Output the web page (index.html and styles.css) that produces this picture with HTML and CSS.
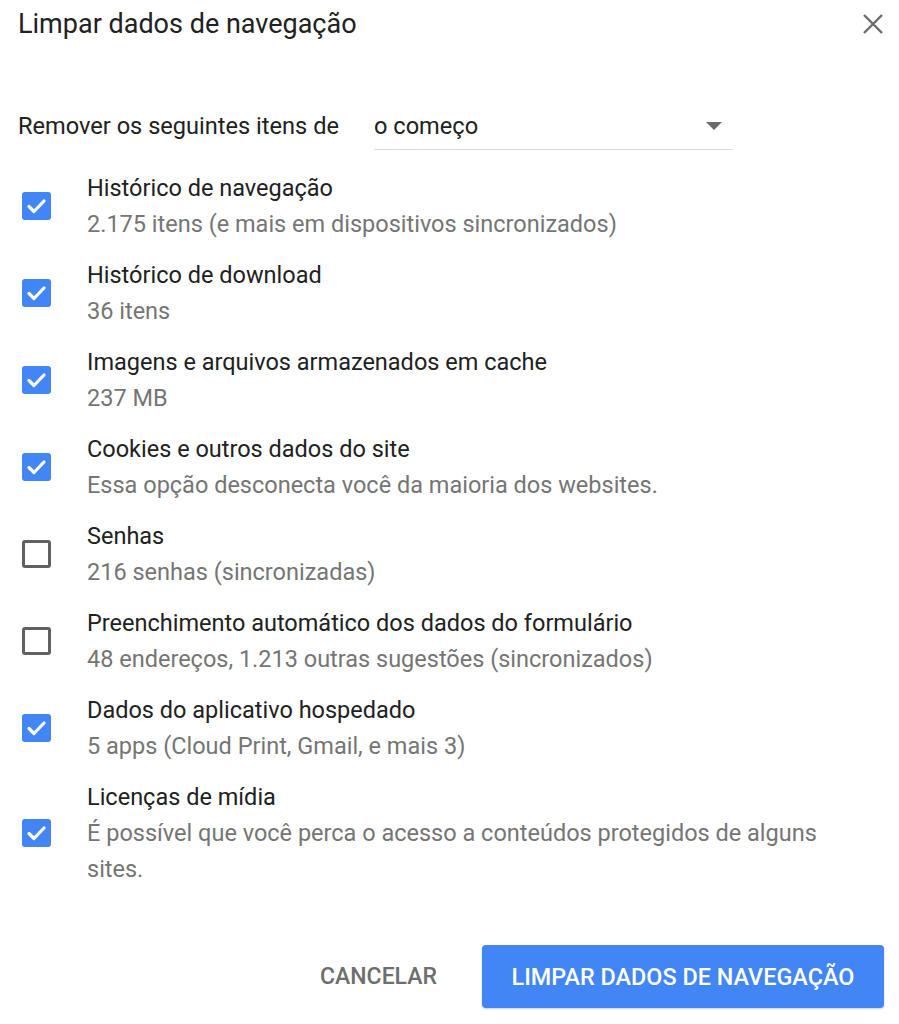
FILE: index.html
```html
<!DOCTYPE html>
<html lang="pt-BR">
<head>
    <meta charset="UTF-8">
    <meta name="viewport" content="width=device-width, initial-scale=1.0">
    <title>Limpar dados de navegação</title>
    <link rel="stylesheet" href="styles.css">
</head>
<body>
    <div class="dialog">
        <header class="dialog-header">
            <h1>Limpar dados de navegação</h1>
            <button class="close-btn" aria-label="Fechar">
                <svg width="22" height="22" viewBox="0 0 22 22">
                    <path d="M2 2 L20 20 M20 2 L2 20" stroke="#6b6b6b" stroke-width="2.4" fill="none"/>
                </svg>
            </button>
        </header>

        <div class="range-row">
            <span class="range-label">Remover os seguintes itens de</span>
            <div class="select">
                <span>o começo</span>
                <span class="arrow"></span>
            </div>
        </div>

        <ul class="options">
            <li class="option">
                <span class="checkbox checked"></span>
                <div class="option-text">
                    <div class="option-title">Histórico de navegação</div>
                    <div class="option-sub">2.175 itens (e mais em dispositivos sincronizados)</div>
                </div>
            </li>
            <li class="option">
                <span class="checkbox checked"></span>
                <div class="option-text">
                    <div class="option-title">Histórico de download</div>
                    <div class="option-sub">36 itens</div>
                </div>
            </li>
            <li class="option">
                <span class="checkbox checked"></span>
                <div class="option-text">
                    <div class="option-title">Imagens e arquivos armazenados em cache</div>
                    <div class="option-sub">237 MB</div>
                </div>
            </li>
            <li class="option">
                <span class="checkbox checked"></span>
                <div class="option-text">
                    <div class="option-title">Cookies e outros dados do site</div>
                    <div class="option-sub">Essa opção desconecta você da maioria dos websites.</div>
                </div>
            </li>
            <li class="option">
                <span class="checkbox"></span>
                <div class="option-text">
                    <div class="option-title">Senhas</div>
                    <div class="option-sub">216 senhas (sincronizadas)</div>
                </div>
            </li>
            <li class="option">
                <span class="checkbox"></span>
                <div class="option-text">
                    <div class="option-title">Preenchimento automático dos dados do formulário</div>
                    <div class="option-sub">48 endereços, 1.213 outras sugestões (sincronizados)</div>
                </div>
            </li>
            <li class="option">
                <span class="checkbox checked"></span>
                <div class="option-text">
                    <div class="option-title">Dados do aplicativo hospedado</div>
                    <div class="option-sub">5 apps (Cloud Print, Gmail, e mais 3)</div>
                </div>
            </li>
            <li class="option">
                <span class="checkbox checked"></span>
                <div class="option-text">
                    <div class="option-title">Licenças de mídia</div>
                    <div class="option-sub">É possível que você perca o acesso a conteúdos protegidos de alguns sites.</div>
                </div>
            </li>
        </ul>

        <footer class="dialog-footer">
            <button class="btn-cancel">CANCELAR</button>
            <button class="btn-primary">LIMPAR DADOS DE NAVEGAÇÃO</button>
        </footer>
    </div>
</body>
</html>
```

FILE: styles.css
```css
body {
    margin: 0;
    padding: 0;
    background-color: #fff;
    font-family: Roboto, "Liberation Sans", Arial, sans-serif;
    color: #212121;
}

.dialog {
    width: 899px;
    height: 1024px;
    box-sizing: border-box;
    padding: 0 15px 0 18px;
    display: flex;
    flex-direction: column;
}

.dialog-header {
    display: flex;
    justify-content: space-between;
    align-items: center;
    height: 48px;
}

.dialog-header h1 {
    margin: 0;
    font-size: 27px;
    font-weight: 400;
    color: #212121;
}

.close-btn {
    background: none;
    border: none;
    padding: 0;
    display: flex;
    cursor: pointer;
}

.range-row {
    display: flex;
    align-items: flex-end;
    margin-top: 54px;
    height: 48px;
}

.range-label {
    font-size: 23.6px;
    line-height: 48px;
    width: 356px;
}

.select {
    width: 359px;
    height: 47px;
    border-bottom: 1px solid #dcdcdc;
    display: flex;
    align-items: center;
    justify-content: space-between;
    font-size: 23.6px;
    box-sizing: border-box;
    padding-right: 11px;
}

.select .arrow {
    width: 0;
    height: 0;
    border-left: 8px solid transparent;
    border-right: 8px solid transparent;
    border-top: 8px solid #6b6b6b;
}

.options {
    list-style: none;
    margin: 20px 0 0;
    padding: 0;
}

.option {
    display: flex;
    align-items: center;
    margin-bottom: 15px;
}

.checkbox {
    flex: none;
    width: 29px;
    height: 28px;
    box-sizing: border-box;
    border: 3px solid #616161;
    border-radius: 3px;
    margin: 0 36px 0 4px;
}

.checkbox.checked {
    border: none;
    background-color: #4285f4;
    background-image: url("data:image/svg+xml;utf8,<svg xmlns='http://www.w3.org/2000/svg' viewBox='0 0 29 28'><path d='M7 14.5 L12 19.5 L22 9' stroke='white' stroke-width='3.2' fill='none' stroke-linecap='round' stroke-linejoin='round'/></svg>");
    background-size: 100% 100%;
}

.option-text {
    flex: 1;
    line-height: 36px;
}

.option-title {
    font-size: 23.5px;
    color: #212121;
}

.option-sub {
    font-size: 23.5px;
    color: #757575;
    padding-right: 50px;
}

.dialog-footer {
    display: flex;
    justify-content: flex-end;
    align-items: center;
    gap: 45px;
    margin-top: auto;
    margin-bottom: 16px;
}

.btn-cancel {
    background: none;
    border: none;
    font-family: inherit;
    font-size: 23px;
    font-weight: 500;
    color: #6e6e6e;
    padding: 0;
}

.btn-primary {
    width: 402px;
    height: 63px;
    border: none;
    border-radius: 4px;
    background-color: #4285f4;
    color: #fff;
    font-family: inherit;
    font-size: 23.4px;
    font-weight: 500;
    box-shadow: 0 1px 2px rgba(0, 0, 0, 0.2);
}
```
